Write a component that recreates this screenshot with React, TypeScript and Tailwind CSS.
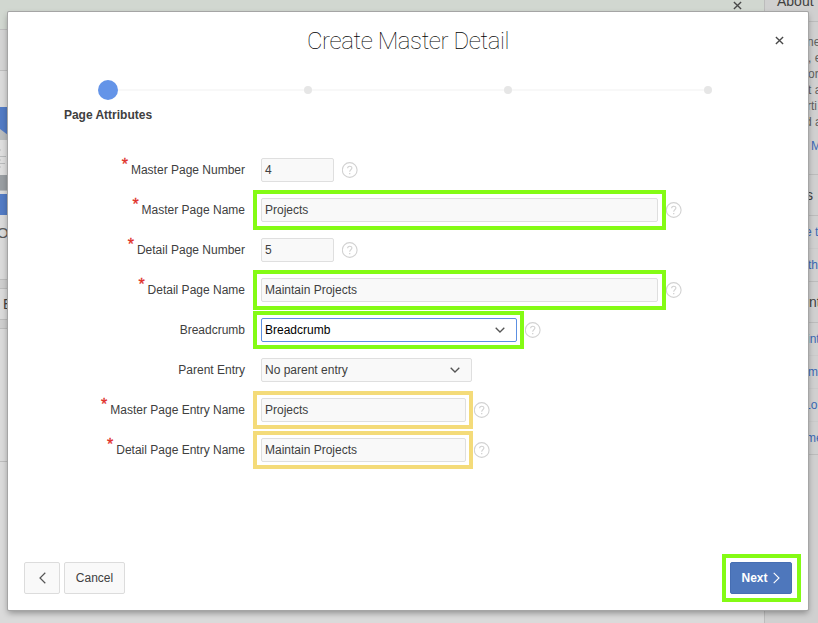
import type { ReactNode } from "react";

type Mark = "green" | "greenShort" | "yellow";

const marks: Record<Mark, string> = {
  green: "-top-2 -bottom-2 -left-2 -right-2 border-[#84fb14]",
  greenShort: "-top-[7px] -bottom-[7px] -left-2 -right-[7px] border-[#84fb14]",
  yellow: "-top-[7px] -bottom-[7px] -left-2 -right-[7px] border-[#f4db79]",
};

function Cross({ className }: { className: string }) {
  return (
    <svg viewBox="0 0 10 10" className={className} fill="none" stroke="#484848" strokeWidth="1.5">
      <path d="M1 1 9 9M9 1 1 9" />
    </svg>
  );
}

function Help() {
  return (
    <svg viewBox="0 0 16 16" className="ml-2 size-4 shrink-0" fill="none" stroke="#d2d2d2">
      <circle cx="7.700" cy="8" r="7.4" strokeWidth="1.1" />
      <path d="M5.600 6.3C5.600 3.5 9.900 3.6 9.900 6.1 9.900 7.8 7.700 7.8 7.700 9.7" strokeWidth="1.1" />
      <path d="M7.700 10.9v1.3" strokeWidth="1.3" />
    </svg>
  );
}

function Row({
  label,
  required,
  width,
  mark,
  help = true,
  select,
  active,
  children,
}: {
  label: string;
  required?: boolean;
  width: string;
  mark?: Mark;
  help?: boolean;
  select?: boolean;
  active?: boolean;
  children: ReactNode;
}) {
  return (
    <div className="flex h-10 items-center">
      <div className="flex w-[237px] shrink-0 justify-end text-[12px] leading-4">
        {required && <span className="mr-[3px] -mt-[5px] text-[16px] leading-4 text-[#e02d26] [-webkit-text-stroke:0.3px_#e02d26]">*</span>}
        <span>{label}</span>
      </div>
      <div className={`relative ml-4 h-6 shrink-0 ${width}`}>
        <div
          className={`flex h-full items-center justify-between rounded-[2px] border pl-[3px] text-[12px] leading-4 ${
            active ? "border-[#5c90e2] bg-white text-black" : "border-[#dfdfdf] bg-[#f9f9f9] text-[#404040]"
          }`}
        >
          <span>{children}</span>
          {select && (
            <svg viewBox="0 0 10 6" className="mr-[11px] h-1.5 w-2.5" fill="none" stroke="#555" strokeWidth="1.3">
              <path d="M.7.7 5 5 9.3.7" />
            </svg>
          )}
        </div>
        {mark && <div className={`absolute border-4 ${marks[mark]}`} />}
      </div>
      {help && <Help />}
    </div>
  );
}

function Backdrop() {
  return (
    <div className="flex h-full">
      <div className="flex w-[764px] flex-col">
        <div className="flex h-[30px] justify-end border-b border-[#bdbdbd] bg-[#d1d7d0] pr-[22px]">
          <Cross className="mt-px size-[9px]" />
        </div>
        <div className="h-[41px] border-b border-[#bdbdbd] bg-[#d4d4d4]" />
        <div className="h-9" />
        <svg viewBox="0 0 8 108" className="h-[108px] w-2">
          <path d="M0 0h8v33H0z" fill="#b9bcbd" />
          <path d="M0 0h8v28L0 22z" fill="#527bc4" />
          <path d="M0 33h8v35H0z" fill="#dedede" />
          <path d="M0 43h1M0 49.5h6M0 53h1M0 56.5h5M0 60h1" stroke="#b8babb" />
          <path d="M0 68h8v15H0z" fill="#999ea2" />
          <path d="M0 83.500h8" stroke="#b5b8ba" />
          <path d="M0 87h8v21H0z" fill="#527bc4" />
        </svg>
        <div className="-ml-[3px] h-16 pt-[9px] text-[15px] leading-[18px] text-[#5a5a5a]">O</div>
        <div className="h-[10px] border-y border-[#bcbcbc] bg-[#cecece]" />
        <div className="h-[30px] pl-[3px] pt-[7px] text-[14px] leading-4">E</div>
        <div className="h-[10px] border-y border-[#bcbcbc] bg-[#cecece]" />
        <div className="h-[133px] border-b border-[#bdbdbd]" />
      </div>
      <div className="flex w-[54px] flex-col overflow-hidden whitespace-nowrap border-l border-[#bcbcbc] bg-[#d0d0d0] text-[12px] text-[#606060]">
        <div className="h-[22px] border-b border-[#bcbcbc] pl-3 text-[14px] leading-4 text-[#404040]">
          <div className="-mt-[7px]">About</div>
        </div>
        <div className="flex h-[153px] flex-col border-b border-[#bcbcbc] pl-[42px] pt-3 leading-4">
          <span>ne</span>
          <span className="ml-px">, e</span>
          <span className="ml-px">or</span>
          <span className="ml-px">t a</span>
          <span>rti</span>
          <span className="-ml-[2px]">d a</span>
          <span className="ml-1 mt-2 text-[#3b69b4]">M</span>
        </div>
        <div className="h-[41px] border-b border-[#bcbcbc] pl-[41px] pt-3 text-[14px] leading-4 text-[#404040]">s</div>
        <div className="h-[33px] border-b border-[#cacaca] pl-10 leading-8 text-[#3b69b4]">e t</div>
        <div className="h-[33px] border-b border-[#bcbcbc] pl-[43px] leading-8 text-[#3b69b4]">th</div>
        <div className="h-[41px] border-b border-[#bcbcbc] pl-11 pt-3 text-[14px] leading-4 text-[#404040]">nt</div>
        <div className="h-[33px] border-b border-[#cacaca] pl-[42px] leading-8 text-[#3b69b4]">int</div>
        <div className="h-[33px] border-b border-[#cacaca] pl-[43px] leading-8 text-[#3b69b4]">me</div>
        <div className="h-[33px] border-b border-[#cacaca] pl-[39px] leading-8 text-[#3b69b4]">Lo</div>
        <div className="h-[33px] border-b border-[#bcbcbc] pl-[41px] leading-8 text-[#3b69b4]">me</div>
      </div>
    </div>
  );
}

export default function App() {
  return (
    <div className="relative h-[623px] w-[818px] overflow-hidden bg-[#dadada] font-['Liberation_Sans',Arial,sans-serif] text-[#404040]">
      <Backdrop />
      <div className="absolute left-2 top-3 flex h-[598px] w-[800px] flex-col rounded-[1px] bg-white shadow-[0_0_0_1px_#a5a5a5,0_3px_6px_rgba(0,0,0,0.35)]">
        <div className="relative flex h-[58px] items-center justify-center">
          <h1 className="whitespace-nowrap font-['Roboto',sans-serif] text-[24px] font-thin leading-8 tracking-[-0.4px] text-black">
            Create Master Detail
          </h1>
          <Cross className="absolute right-6 top-6 size-[9px]" />
        </div>
        <div className="flex h-10 items-center px-[90px]">
          <div className="z-10 size-5 rounded-full bg-[#6494e8]" />
          <div className="h-0.5 flex-1 bg-[#f8f8f8]" />
          <div className="size-2 rounded-full bg-[#e6e6e6]" />
          <div className="h-0.5 w-48 bg-[#f8f8f8]" />
          <div className="size-2 rounded-full bg-[#e6e6e6]" />
          <div className="h-0.5 w-48 bg-[#f8f8f8]" />
          <div className="size-2 rounded-full bg-[#e6e6e6]" />
          <div className="w-1.5" />
        </div>
        <div className="-mt-[3px] w-[200px] text-center text-[12px] font-bold leading-4">Page Attributes</div>
        <div className="mt-[27px]">
          <Row label="Master Page Number" required width="w-[73px]">4</Row>
          <Row label="Master Page Name" required width="w-[397px]" mark="green">Projects</Row>
          <Row label="Detail Page Number" required width="w-[73px]">5</Row>
          <Row label="Detail Page Name" required width="w-[397px]" mark="green">Maintain Projects</Row>
          <Row label="Breadcrumb" width="w-[256px]" mark="greenShort" select active>Breadcrumb</Row>
          <Row label="Parent Entry" width="w-[211px]" select help={false}>No parent entry</Row>
          <Row label="Master Page Entry Name" required width="w-[205px]" mark="yellow">Projects</Row>
          <Row label="Detail Page Entry Name" required width="w-[205px]" mark="yellow">Maintain Projects</Row>
        </div>
        <div className="mb-4 mt-auto flex h-8 gap-1 px-4 text-[12px]">
          <button className="flex w-9 items-center justify-center rounded-[2px] border border-[#dcdcdc] bg-[#f9f9f9]">
            <svg viewBox="0 0 7 12" className="h-3 w-[7px]" fill="none" stroke="#555" strokeWidth="1.2">
              <path d="M6.300.8 1 6l5.300 5.200" />
            </svg>
          </button>
          <button className="w-[61px] rounded-[2px] border border-[#dcdcdc] bg-[#f9f9f9]">Cancel</button>
          <div className="relative ml-auto w-[62px]">
            <button className="flex h-full w-full items-center justify-center gap-[5px] rounded-[2px] border border-[#466eb3] bg-[#4e77bc] pr-px font-bold text-white">
              Next
              <svg viewBox="0 0 7 12" className="h-3 w-[7px]" fill="none" stroke="#fff" strokeWidth="1.1">
                <path d="M.7.8 6 6 .7 11.200" />
              </svg>
            </button>
            <div className="absolute -bottom-2 -left-2 -right-[9px] -top-2 border-4 border-[#84fb14]" />
          </div>
        </div>
      </div>
    </div>
  );
}
